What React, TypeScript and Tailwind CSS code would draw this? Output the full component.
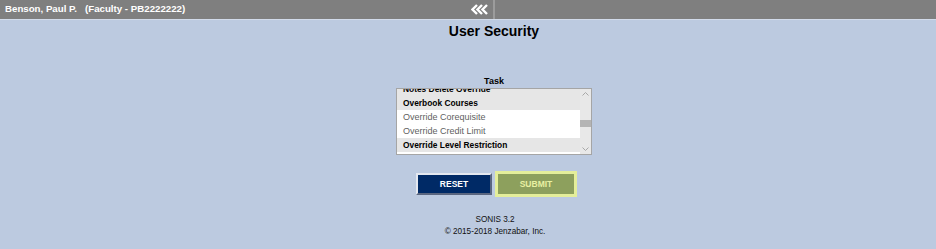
const tasks = [
  { name: "Notes Delete Override", bold: true },
  { name: "Overbook Courses", bold: true },
  { name: "Override Corequisite", bold: false },
  { name: "Override Credit Limit", bold: false },
  { name: "Override Level Restriction", bold: true },
  { name: "Override Prerequisite", bold: false },
];

const Chevrons = () => (
  <svg width="18" height="11" viewBox="0 0 18 11" fill="none">
    {[0, 5, 10].map((x) => (
      <polyline
        key={x}
        points={`${x + 6},1 ${x + 1.5},5.5 ${x + 6},10`}
        stroke="white"
        strokeWidth="2.4"
        strokeLinejoin="miter"
      />
    ))}
  </svg>
);

const TaskList = () => (
  <div className="relative mt-[1px] h-[67px] w-[196px] overflow-hidden border border-[#a5a5a5] bg-white">
    <div className="mt-[-7px] pr-[11px]">
      {tasks.map((t) => (
        <div
          key={t.name}
          className={
            t.bold
              ? "h-[14px] bg-[#e6e6e6] pl-[6px] text-[8.4px] leading-[14px] font-bold text-black"
              : "h-[14px] bg-white pl-[6px] text-[9px] leading-[14px] text-[#5f5f5f]"
          }
        >
          {t.name}
        </div>
      ))}
    </div>
    <div className="absolute top-0 right-0 flex h-full w-[11px] flex-col items-center justify-between bg-[#e8e8e8] py-[3px]">
      <svg width="7" height="4" viewBox="0 0 7 4">
        <polyline points="0.5,3.5 3.5,0.5 6.5,3.5" fill="none" stroke="#a8a8a8" strokeWidth="1" />
      </svg>
      <div className="absolute top-[31px] left-0 h-[7px] w-[11px] bg-[#b4b4b4]" />
      <svg width="7" height="4" viewBox="0 0 7 4">
        <polyline points="0.5,0.5 3.5,3.5 6.5,0.5" fill="none" stroke="#a8a8a8" strokeWidth="1" />
      </svg>
    </div>
  </div>
);

export default function App() {
  return (
    <div className="min-h-screen bg-[#bccae0] font-['Liberation_Sans',Arial,sans-serif]">
      <div className="flex h-[20px] border-b border-[#d2dbea] bg-[#7f7f7f]">
        <div className="flex w-[493px] items-center justify-between pr-[4px] pl-[5px] text-[9.7px] font-bold text-white">
          <span>Benson, Paul P.&nbsp;&nbsp; (Faculty - PB2222222)</span>
          <Chevrons />
        </div>
        <div className="w-[2px] bg-[#9c9c9c]" />
        <div className="flex-1" />
      </div>

      <div className="flex flex-col items-center pl-[52px]">
        <h1 className="mt-[3px] text-[14px] leading-[16px] font-bold text-black">User Security</h1>
        <div className="mt-[36px] text-[9px] leading-[12px] font-bold text-black">Task</div>
        <TaskList />

        <div className="mt-[16px] flex items-center gap-[3px] pl-[5px]">
          <button className="h-[22px] w-[76px] border-2 border-t-[#e4e8f0] border-r-[#5a6680] border-b-[#5a6680] border-l-[#e4e8f0] bg-[#002a66] text-[8.5px] font-bold text-white">
            RESET
          </button>
          <button className="h-[26px] w-[82px] border-[3px] border-[#e4ee9a] bg-[#8da05d] text-[8.5px] font-bold text-[#e8f0a2]">
            SUBMIT
          </button>
        </div>

        <div className="mt-[17px] pl-[2px] text-center text-[8.2px] leading-[12px] text-[#111]">
          <div>SONIS 3.2</div>
          <div>© 2015-2018 Jenzabar, Inc.</div>
        </div>
      </div>
    </div>
  );
}
